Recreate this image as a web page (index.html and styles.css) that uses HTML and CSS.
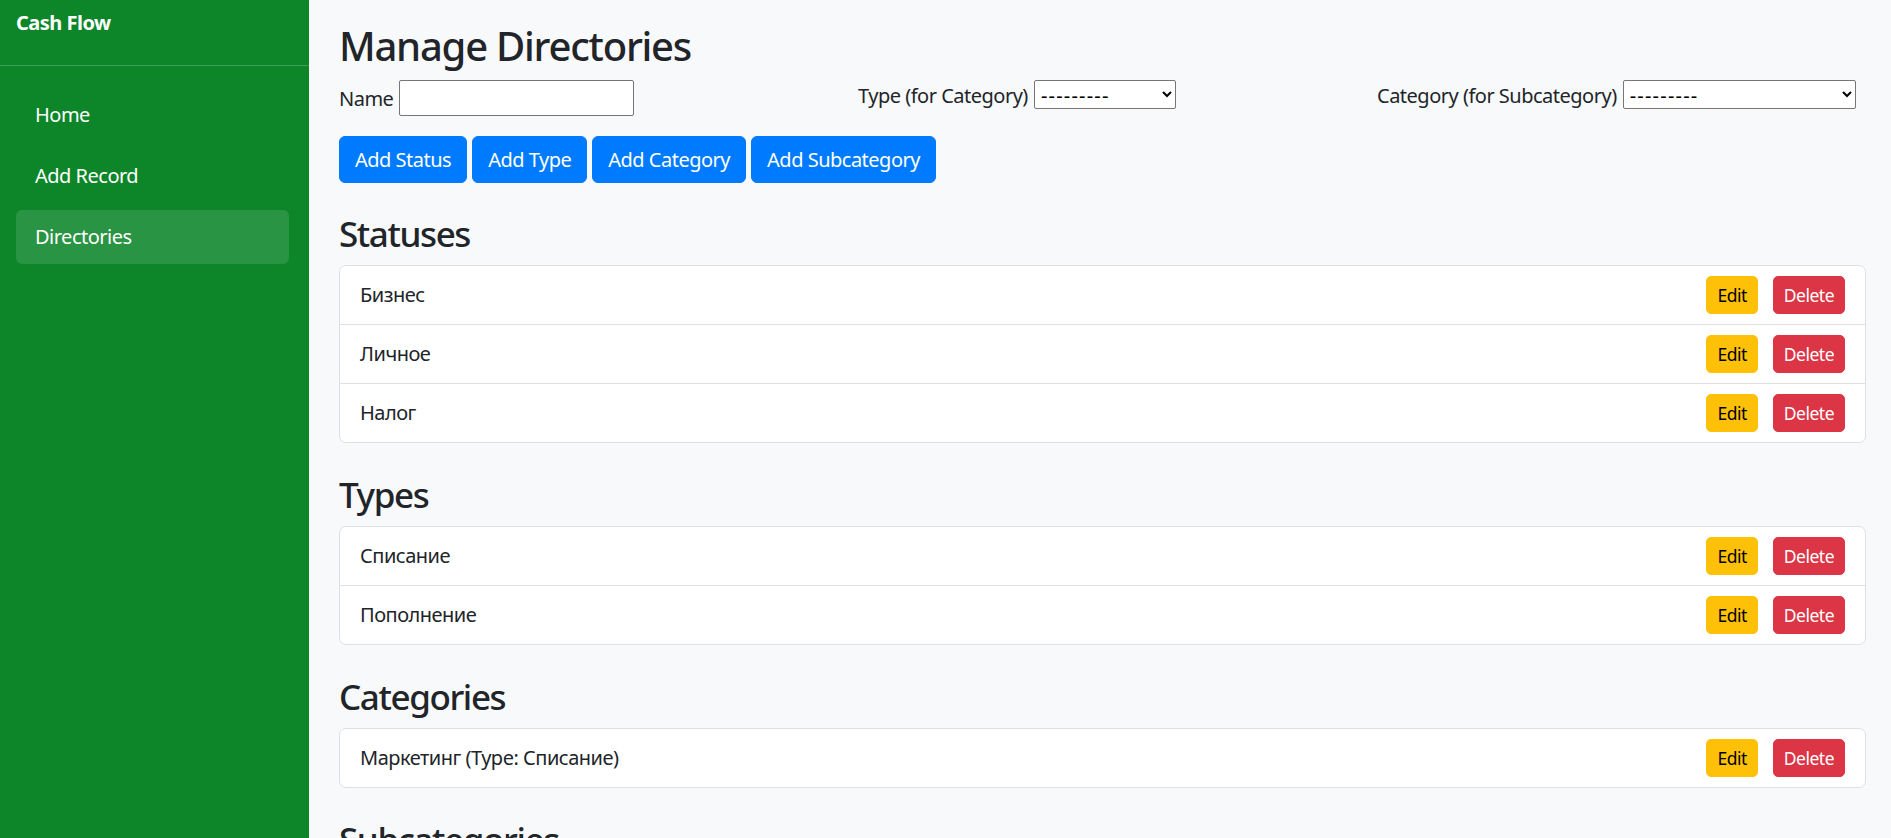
FILE: index.html
```html
<!DOCTYPE html>
<html lang="ru">
<head>
<meta charset="utf-8">
<title>Cash Flow - Manage Directories</title>
<link rel="stylesheet" href="styles.css">
</head>
<body>
<div class="layout">
  <aside class="sidebar">
    <div class="brand">Cash Flow</div>
    <nav class="nav">
      <a class="nav-link" href="#">Home</a>
      <a class="nav-link" href="#">Add Record</a>
      <a class="nav-link active" href="#">Directories</a>
    </nav>
  </aside>
  <main class="main">
    <h2 class="page-title">Manage Directories</h2>
    <form class="dir-form">
      <div class="form-row">
        <div class="form-col">
          <label class="form-label" for="name">Name</label>
          <input class="text-input" id="name" type="text">
        </div>
        <div class="form-col">
          <label class="form-label" for="type">Type (for Category)</label>
          <select class="select select-type" id="type"><option>---------</option></select>
        </div>
        <div class="form-col">
          <label class="form-label" for="cat">Category (for Subcategory)</label>
          <select class="select select-cat" id="cat"><option>---------</option></select>
        </div>
      </div>
      <div class="btn-row">
        <button type="button" class="btn btn-primary">Add Status</button>
        <button type="button" class="btn btn-primary">Add Type</button>
        <button type="button" class="btn btn-primary">Add Category</button>
        <button type="button" class="btn btn-primary">Add Subcategory</button>
      </div>
    </form>

    <h3 class="section-title">Statuses</h3>
    <ul class="list-card">
      <li class="list-item"><span>Бизнес</span><span class="actions"><button class="btn-sm btn-warning">Edit</button><button class="btn-sm btn-danger">Delete</button></span></li>
      <li class="list-item"><span>Личное</span><span class="actions"><button class="btn-sm btn-warning">Edit</button><button class="btn-sm btn-danger">Delete</button></span></li>
      <li class="list-item"><span>Налог</span><span class="actions"><button class="btn-sm btn-warning">Edit</button><button class="btn-sm btn-danger">Delete</button></span></li>
    </ul>

    <h3 class="section-title">Types</h3>
    <ul class="list-card">
      <li class="list-item"><span>Списание</span><span class="actions"><button class="btn-sm btn-warning">Edit</button><button class="btn-sm btn-danger">Delete</button></span></li>
      <li class="list-item"><span>Пополнение</span><span class="actions"><button class="btn-sm btn-warning">Edit</button><button class="btn-sm btn-danger">Delete</button></span></li>
    </ul>

    <h3 class="section-title">Categories</h3>
    <ul class="list-card">
      <li class="list-item"><span>Маркетинг (Type: Списание)</span><span class="actions"><button class="btn-sm btn-warning">Edit</button><button class="btn-sm btn-danger">Delete</button></span></li>
    </ul>

    <h3 class="section-title">Subcategories</h3>
  </main>
</div>
</body>
</html>
```

FILE: styles.css
```css
html, body {
  margin: 0;
  padding: 0;
  height: 100%;
  overflow: hidden;
}

body {
  font-family: "Noto Sans", "Open Sans", sans-serif;
  font-size: 20px;
  line-height: 1.5;
  letter-spacing: -0.025em;
  color: #212529;
  background: #f8f9fa;
}

.layout {
  display: flex;
  min-height: 100vh;
}

.sidebar {
  width: 309px;
  flex: 0 0 309px;
  background: #0c8629;
  color: #fff;
}

.brand {
  height: 66px;
  padding: 8px 0 0 16px;
  box-sizing: border-box;
  font-size: 20px;
  font-weight: 700;
  border-bottom: 1px solid rgba(255, 255, 255, 0.2);
}

.nav {
  display: flex;
  flex-direction: column;
  gap: 7px;
  padding: 22px 20px 0 16px;
}

.nav-link {
  display: block;
  padding: 12px 19px;
  color: #fff;
  text-decoration: none;
  border-radius: 6px;
  font-size: 20px;
  line-height: 30px;
}

.nav-link.active {
  background: rgba(255, 255, 255, 0.12);
}

.main {
  flex: 1;
  padding: 22px 25px 0 30px;
  min-width: 0;
}

.page-title {
  margin: 0 0 10px;
  font-size: 40px;
  line-height: 48px;
  font-weight: 500;
  letter-spacing: -0.031em;
}

.dir-form {
  margin-bottom: 30px;
}

.form-row {
  display: grid;
  grid-template-columns: repeat(3, 1fr);
  column-gap: 30px;
  height: 38px;
  align-items: start;
}

.form-col {
  display: flex;
  align-items: baseline;
  gap: 6px;
}

.form-label {
  white-space: nowrap;
}

.text-input {
  width: 235px;
  height: 36px;
  box-sizing: border-box;
  border: 1px solid #767676;
  border-radius: 2px;
  background: #fff;
  font: inherit;
  padding: 1px 3px;
}

.select {
  height: 29px;
  box-sizing: border-box;
  border: 1px solid #767676;
  border-radius: 2px;
  background: #fff;
  font-family: "Noto Sans", sans-serif;
  font-size: 20px;
  letter-spacing: 0.06em;
  color: #000;
  padding: 0 2px;
}

.select-type { width: 142px; }
.select-cat { width: 233px; }

.btn-row {
  display: flex;
  gap: 5px;
  margin-top: 18px;
}

.btn {
  font-family: inherit;
  font-size: 20px;
  letter-spacing: inherit;
  line-height: 30px;
  padding: 7.5px 15px;
  border: 1px solid transparent;
  border-radius: 6px;
  cursor: pointer;
}

.btn-primary {
  background: #007bff;
  border-color: #007bff;
  color: #fff;
}

.section-title {
  margin: 0 0 10px;
  font-size: 35px;
  line-height: 42px;
  font-weight: 500;
  letter-spacing: -0.04em;
}

.list-card {
  list-style: none;
  margin: 0 0 31px;
  padding: 0;
  background: #fff;
  border: 1px solid #dfe0e1;
  border-radius: 7px;
}

.list-item {
  display: flex;
  justify-content: space-between;
  align-items: center;
  padding: 10px 20px;
  border-bottom: 1px solid #dfe0e1;
}

.list-item:last-child {
  border-bottom: 0;
}

.actions {
  display: flex;
  gap: 15px;
}

.btn-sm {
  font-family: inherit;
  font-size: 17.5px;
  letter-spacing: inherit;
  line-height: 26px;
  padding: 5px 10px;
  border: 1px solid transparent;
  border-radius: 5px;
  cursor: pointer;
}

.btn-warning {
  background: #ffc107;
  border-color: #ffc107;
  color: #000;
}

.btn-danger {
  background: #dc3545;
  border-color: #dc3545;
  color: #fff;
}
```
